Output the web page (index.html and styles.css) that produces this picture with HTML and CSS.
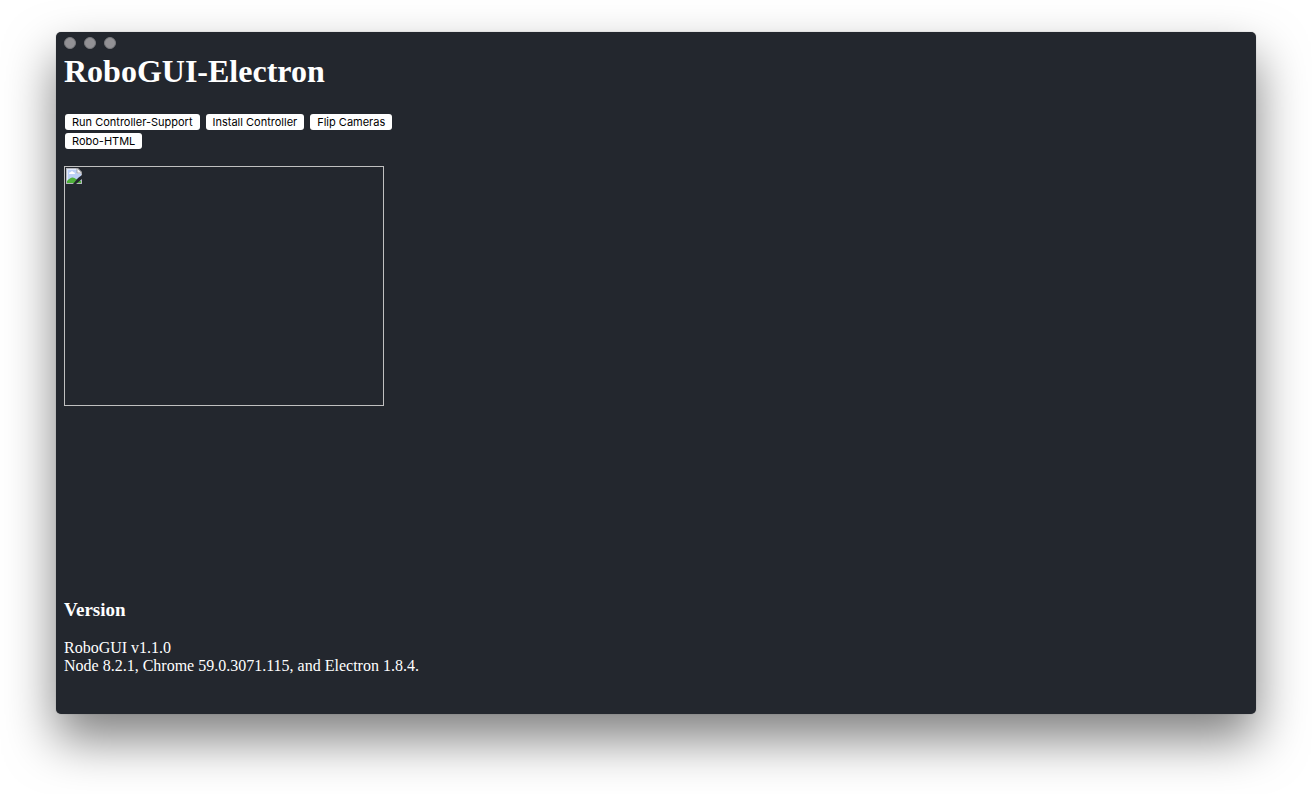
FILE: index.html
```html
<!DOCTYPE html>
<html lang="en">
<head>
<meta charset="utf-8">
<title>RoboGUI-Electron</title>
<link rel="stylesheet" href="styles.css">
</head>
<body>
<main class="window">
  <div class="lights"><span class="light"></span><span class="light"></span><span class="light"></span></div>
  <h1 class="title">RoboGUI-Electron</h1>
  <div class="actions">
    <button class="btn" type="button">Run Controller-Support</button>
    <button class="btn" type="button">Install Controller</button>
    <button class="btn" type="button">Flip Cameras</button>
    <button class="btn" type="button">Robo-HTML</button>
  </div>
  <div class="camera">
    <svg class="broken" width="16" height="16" viewBox="0 0 16 16" aria-hidden="true">
      <path d="M0 0h12l4 4v12H0z" fill="#b4b6bc"/>
      <path d="M1 1h10v4h4v10H1z" fill="#dfe8fb"/>
      <path d="M2 2h9v4h4v8H2z" fill="#bcd0f6"/>
      <path d="M3 6q0-2 2-2 1-2 2 0 2 0 2 2z" fill="#fff"/>
      <path d="M1 15v-2q5-6 9-2l5 2v2z" fill="#4fb13b"/>
      <path d="M11 0v5h5z" fill="#f4f4f6" stroke="#888" stroke-width=".6"/>
      <path d="M16 7l-4 3-5 6h3l6-5z" fill="#23272e"/>
    </svg>
  </div>
  <footer class="version">
    <h3 class="subtitle">Version</h3>
    <p class="info">RoboGUI v1.1.0<br>Node 8.2.1, Chrome 59.0.3071.115, and Electron 1.8.4.</p>
  </footer>
</main>
</body>
</html>
```
FILE: styles.css
```css
* { box-sizing: border-box; }
body {
  margin: 0;
  min-height: 100vh;
  padding: 32px 56px 80px;
  display: flex;
  background: #fff;
  font-family: "Liberation Serif", "Times New Roman", serif;
  font-size: 16px;
  line-height: 18px;
}
.window {
  flex: 1;
  display: flex;
  flex-direction: column;
  padding: 5px 8px 39px;
  border-radius: 5px;
  background: #23272e;
  color: #fff;
  box-shadow: 0 0 1px rgba(0,0,0,.4), 0 25px 50px rgba(0,0,0,.5);
}
.lights { display: flex; gap: 8px; height: 12px; }
.light { width: 12px; height: 12px; border: 1px solid #78797d; border-radius: 50%; background: #929195; }
.title { margin: 4px 0 24px; font-size: 32px; line-height: 36px; }
.actions { display: flex; flex-wrap: wrap; gap: 3px 6px; max-width: 340px; padding: 1px; }
.btn {
  height: 16px;
  padding: 0 7px;
  border: 0;
  border-radius: 3px;
  background: #fff;
  color: #000;
  font: 11px/16px Inter, sans-serif;
}
.camera { width: 320px; height: 240px; margin-top: 16px; padding: 1px; border: 1px solid #c0c0c0; }
.broken { display: block; }
.version { margin-top: auto; }
.subtitle { margin: 0 0 19px; font-size: 19px; line-height: 20px; }
.info { margin: 0; }
```
